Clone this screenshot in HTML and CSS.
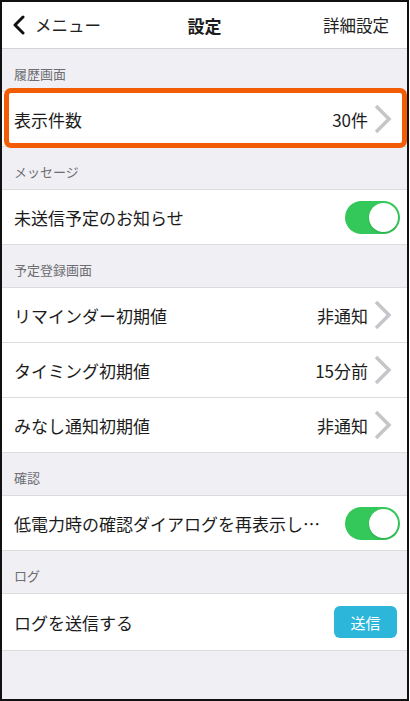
FILE: index.html
```html
<!DOCTYPE html>
<html lang="ja">
<head>
  <meta charset="UTF-8" />
  <meta name="viewport" content="width=device-width, initial-scale=1.0" />
  <title>設定</title>
  <link rel="stylesheet" href="styles.css">
</head>
<body>
  <div class="frame">
    <header class="navbar">
      <div class="nav-back">
        <svg width="14" height="20" viewBox="0 0 14 20"><path d="M11 2 L3 10 L11 18" fill="none" stroke="#111" stroke-width="3" stroke-linecap="round" stroke-linejoin="round"/></svg>
        <span>メニュー</span>
      </div>
      <h1 class="nav-title">設定</h1>
      <div class="nav-action">詳細設定</div>
    </header>

    <main class="settings">
      <div class="section-title">履歴画面</div>
      <ul class="group">
        <li class="row highlight">
          <span class="label">表示件数</span>
          <span class="value">30件</span>
          <svg class="chevron" width="19" height="30" viewBox="0 0 19 30"><path d="M3 2 L16 15 L3 28" fill="none" stroke="#c6c6ca" stroke-width="3.5"/></svg>
        </li>
      </ul>

      <div class="section-title">メッセージ</div>
      <ul class="group">
        <li class="row">
          <span class="label">未送信予定のお知らせ</span>
          <span class="switch on"><span class="knob"></span></span>
        </li>
      </ul>

      <div class="section-title">予定登録画面</div>
      <ul class="group">
        <li class="row">
          <span class="label">リマインダー初期値</span>
          <span class="value">非通知</span>
          <svg class="chevron" width="19" height="30" viewBox="0 0 19 30"><path d="M3 2 L16 15 L3 28" fill="none" stroke="#c6c6ca" stroke-width="3.5"/></svg>
        </li>
        <li class="row">
          <span class="label">タイミング初期値</span>
          <span class="value">15分前</span>
          <svg class="chevron" width="19" height="30" viewBox="0 0 19 30"><path d="M3 2 L16 15 L3 28" fill="none" stroke="#c6c6ca" stroke-width="3.5"/></svg>
        </li>
        <li class="row">
          <span class="label">みなし通知初期値</span>
          <span class="value">非通知</span>
          <svg class="chevron" width="19" height="30" viewBox="0 0 19 30"><path d="M3 2 L16 15 L3 28" fill="none" stroke="#c6c6ca" stroke-width="3.5"/></svg>
        </li>
      </ul>

      <div class="section-title">確認</div>
      <ul class="group">
        <li class="row">
          <span class="label">低電力時の確認ダイアログを再表示し…</span>
          <span class="switch on"><span class="knob"></span></span>
        </li>
      </ul>

      <div class="section-title">ログ</div>
      <ul class="group">
        <li class="row tall">
          <span class="label">ログを送信する</span>
          <button class="send-btn">送信</button>
        </li>
      </ul>
    </main>
  </div>
</body>
</html>
```

FILE: styles.css
```css
:root {
  --bg: #efeff4;
  --line: #dcdcdf;
  --text: #1c1c1c;
  --sub: #6d6d72;
  --green: #34c759;
  --accent: #2cb6da;
  --highlight: #f25c05;
}
* {
  box-sizing: border-box;
  margin: 0;
  padding: 0;
}
body {
  font-family: "Noto Sans CJK JP", "Noto Sans", sans-serif;
  background: #fff;
  color: var(--text);
}
.frame {
  width: 409px;
  height: 701px;
  border: 2px solid #111;
  background: var(--bg);
  overflow: hidden;
}
.navbar {
  height: 47px;
  background: #fff;
  border-bottom: 1px solid #d4d4d6;
  display: flex;
  align-items: center;
  justify-content: space-between;
  padding: 0 18px 0 10px;
  position: relative;
}
.nav-back {
  display: flex;
  align-items: center;
  gap: 9px;
  font-size: 16.5px;
  color: #222;
}
.nav-back svg {
  display: block;
}
.nav-title {
  position: absolute;
  left: 0;
  right: 0;
  text-align: center;
  font-size: 17px;
  font-weight: 700;
  pointer-events: none;
}
.nav-action {
  font-size: 16.5px;
  color: #222;
}
.section-title {
  height: 42px;
  display: flex;
  align-items: flex-end;
  padding: 0 0 9px 12px;
  font-size: 13px;
  line-height: 16px;
  color: var(--sub);
}
.group {
  list-style: none;
  background: #fff;
  border-top: 1px solid var(--line);
}
.row {
  height: 55px;
  border-bottom: 1px solid var(--line);
  display: flex;
  align-items: center;
  padding: 0 15px 0 12px;
  font-size: 17px;
}
.row.tall {
  height: 57px;
}
.row.highlight {
  position: relative;
}
.row.highlight::after {
  content: "";
  position: absolute;
  top: -4px;
  bottom: -2px;
  left: 2px;
  right: 0;
  border: 5px solid var(--highlight);
  border-radius: 7px;
}
.label {
  flex: 1;
  white-space: nowrap;
  overflow: hidden;
}
.value {
  margin-right: 5px;
}
.chevron {
  display: block;
}
.switch {
  width: 55px;
  height: 33px;
  border-radius: 17px;
  background: var(--green);
  padding: 2px;
  display: flex;
  justify-content: flex-end;
  margin-right: -8px;
}
.knob {
  width: 29px;
  height: 29px;
  border-radius: 50%;
  background: #fff;
  box-shadow: 0 1px 2px rgba(0,0,0,0.15);
}
.send-btn {
  width: 63px;
  height: 32px;
  border: none;
  border-radius: 6px;
  background: var(--accent);
  color: #fff;
  font-family: inherit;
  font-size: 15px;
  margin-right: -5px;
}
```
